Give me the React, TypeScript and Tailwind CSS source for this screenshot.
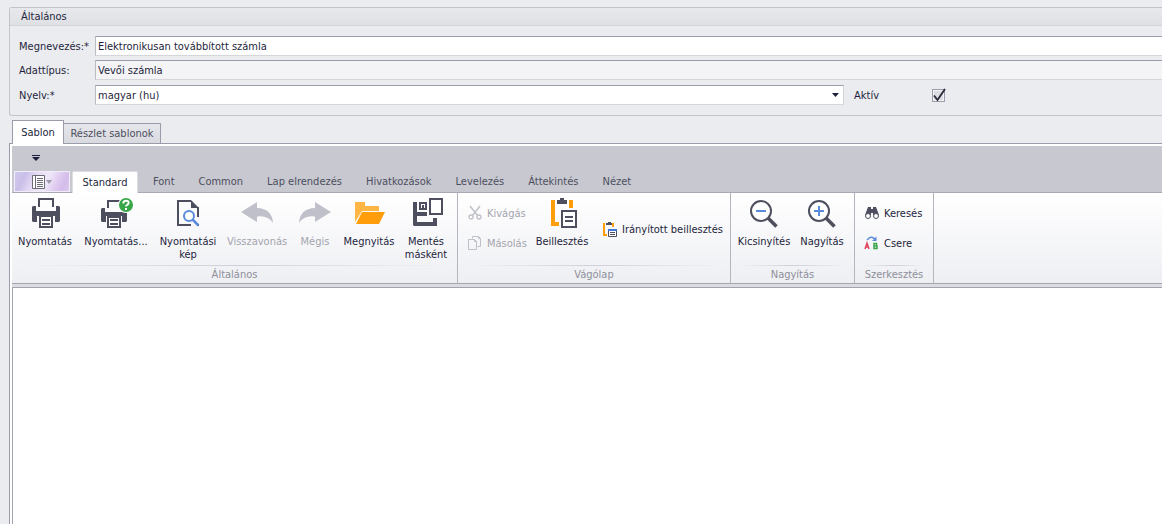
import React from "react";

const RIBBON_TABS = ["Standard", "Font", "Common", "Lap elrendezés", "Hivatkozások", "Levelezés", "Áttekintés", "Nézet"];

function BigIcon({ children }: { children: React.ReactNode }) {
  return (
    <svg width="32" height="32" viewBox="0 0 32 32" className="shrink-0 overflow-visible" aria-hidden="true">
      {children}
    </svg>
  );
}

function SmallIcon({ children }: { children: React.ReactNode }) {
  return (
    <svg width="16" height="16" viewBox="0 0 16 16" className="shrink-0" aria-hidden="true">
      {children}
    </svg>
  );
}

const PrintIcon = () => (
  <BigIcon>
    <path d="M10 10V2h14v8" fill="none" stroke="#4d4f5e" strokeWidth="2" />
    <path d="M4 9h3v5h20V9h3l1 1v14l-1 1h-4v-6H8v6H4l-1-1V10z" fill="#4d4f5e" />
    <path d="M11 19h12v11H11z" fill="#fff" stroke="#4d4f5e" strokeWidth="2" />
    <path d="M13 22h8v2h-8zM13 26h8v2h-8z" fill="#4d4f5e" />
  </BigIcon>
);

const PrintHelpIcon = () => (
  <BigIcon>
    <path d="M8 11V4h13v7" fill="none" stroke="#4d4f5e" strokeWidth="2" />
    <path d="M2 11h3v4h19v-3h3v12l-1 1h-4v-6H6v6H2l-1-1V12z" fill="#4d4f5e" />
    <path d="M8 20h12v10H8z" fill="#fff" stroke="#4d4f5e" strokeWidth="2" />
    <path d="M10 22h8v2h-8zM10 26h8v2h-8z" fill="#4d4f5e" />
    <circle cx="26" cy="8" r="8" fill="#fff" />
    <circle cx="26" cy="8" r="7" fill="#39a749" />
    <path d="M23.400 6.600V5.800q.3-2 2.600-2 2.700 0 2.700 2 0 1-1.200 1.800Q26 8.400 26 9.600" fill="none" stroke="#fff" strokeWidth="1.900" />
    <path d="M25 11h2v2h-2z" fill="#fff" />
  </BigIcon>
);

const PreviewIcon = () => (
  <BigIcon>
    <path d="M19 4H6v24h13M26 10v10" fill="none" stroke="#4d4f5e" strokeWidth="2" />
    <path d="M19 3l8 8h-8zM25 26v3h2v-1z" fill="#4d4f5e" />
    <circle cx="17" cy="19" r="5" fill="#fff" stroke="#5a8bdb" strokeWidth="2" />
    <path d="M20.500 22.500l6 6" stroke="#5a8bdb" strokeWidth="2.500" />
  </BigIcon>
);

const UndoIcon = () => (
  <BigIcon>
    <path d="M0 15L16 5v6q15 .5 16 15-5-8-16-6.500V25z" fill="#bfc0c9" />
  </BigIcon>
);

const RedoIcon = () => (
  <BigIcon>
    <path d="M32 15L16 5v6Q1 11.500 0 26q5-8 16-6.500V25z" fill="#bfc0c9" />
  </BigIcon>
);

const OpenIcon = () => (
  <BigIcon>
    <path d="M2 25V5h10v4h14v5H9z" fill="#ffb645" />
    <path d="M9 15h23l-6 12H3z" fill="#ff9d0a" />
  </BigIcon>
);

const SaveAsIcon = () => (
  <BigIcon>
    <path d="M3 5h4v10h10v4H7v6h16v-4h4v8H4l-1-1z" fill="#4d4f5e" />
    <path d="M10 6h6v6h-6z" fill="none" stroke="#4d4f5e" strokeWidth="2" />
    <path d="M12 8h2v3h-2z" fill="#4d4f5e" />
    <path d="M20 2h12v15H20z" fill="#fff" stroke="#4d4f5e" strokeWidth="2" />
  </BigIcon>
);

const PasteIcon = () => (
  <BigIcon>
    <path d="M5 3h4v22h4v4H5zM23 3h4v8h-4z" fill="#ff9d0a" />
    <path d="M11 3h3V1h4v2h3v4H11z" fill="#4d4f5e" />
    <path d="M16 14h14v16H16z" fill="#fff" stroke="#4d4f5e" strokeWidth="2" />
    <path d="M19 19h8v2h-8zM19 23h8v2h-8z" fill="#4d4f5e" />
  </BigIcon>
);

function ZoomIcon({ plus }: { plus?: boolean }) {
  return (
    <BigIcon>
      <circle cx="13" cy="14" r="10" fill="#fff" stroke="#4d4f5e" strokeWidth="2" />
      <path d="M20 21l8.500 8.500" stroke="#4d4f5e" strokeWidth="3.500" />
      <path d={plus ? "M8 14h10M13 9v10" : "M8 14h10"} stroke="#5a8bdb" strokeWidth="2" />
    </BigIcon>
  );
}

const CutIcon = () => (
  <SmallIcon>
    <path d="M3 1l8 10M13 1L5 11" fill="none" stroke="#bfc0c9" strokeWidth="1.500" />
    <circle cx="4" cy="12" r="2" fill="none" stroke="#bfc0c9" strokeWidth="1.300" />
    <circle cx="12" cy="12" r="2" fill="none" stroke="#bfc0c9" strokeWidth="1.300" />
  </SmallIcon>
);

const CopyIcon = () => (
  <SmallIcon>
    <path d="M5.500 3.500v-2h6l2 2v8h-3M11.500 1.500v2h2M1.500 4.500h6l2 2v8h-8zM7.500 4.500v2h2" fill="none" stroke="#bfc0c9" />
  </SmallIcon>
);

const PasteSpecialIcon = () => (
  <SmallIcon>
    <path d="M1 2h2v11h2v2H1zM10 2h2v4h-2z" fill="#ff9d0a" />
    <path d="M4 2h2V1h3v1h1v2H4z" fill="#4d4f5e" />
    <path d="M6.500 8.500h8v7h-8z" fill="#fff" stroke="#4d4f5e" />
    <path d="M6 8h9v2H6z" fill="#3f7ad6" />
    <path d="M8 11.500h5M8 13.500h5" stroke="#4d4f5e" />
  </SmallIcon>
);

const FindIcon = () => (
  <SmallIcon>
    <path d="M4 2h3v2h2V2h3l3 8H9V8H7v2H1z" fill="#4d4f5e" />
    <circle cx="4" cy="11" r="2.500" fill="#fff" stroke="#4d4f5e" />
    <circle cx="12" cy="11" r="2.500" fill="#fff" stroke="#4d4f5e" />
  </SmallIcon>
);

const ReplaceIcon = () => (
  <SmallIcon>
    <path d="M3 5q4-5 8-1" fill="none" stroke="#5a8bdb" strokeWidth="1.500" />
    <path d="M12.500 1.500V6H8z" fill="#5a8bdb" />
    <path d="M1 14L3 8l2 6M2 12h3" fill="none" stroke="#e2445c" strokeWidth="1.500" />
    <path d="M10 8.500h2.500v2.500H10zM10 11h3v2.500h-3z" fill="none" stroke="#39a749" strokeWidth="1.500" />
  </SmallIcon>
);

interface ButtonProps {
  icon: React.ReactNode;
  label: string;
  width?: string;
  disabled?: boolean;
}

function LargeButton({ icon, label, width, disabled }: ButtonProps) {
  return (
    <button
      type="button"
      disabled={disabled}
      className={`flex flex-col items-center gap-1.5 pt-1 leading-[13px] text-[#1e1f3c] disabled:text-[#a3a4ad] ${width}`}
    >
      {icon}
      <span className="whitespace-pre text-center">{label}</span>
    </button>
  );
}

function SmallButton({ icon, label, disabled }: ButtonProps) {
  return (
    <button
      type="button"
      disabled={disabled}
      className="flex items-center gap-1 whitespace-nowrap text-[#1e1f3c] disabled:text-[#a3a4ad]"
    >
      {icon}
      {label}
    </button>
  );
}

function RibbonGroup({ title, className, children }: { title: string; className: string; children: React.ReactNode }) {
  return (
    <section className="flex shrink-0 flex-col border-r border-[#b4b5be]">
      <div className={`flex h-[72px] ${className}`}>{children}</div>
      <div className="mx-2 h-px bg-linear-to-r from-transparent via-[#cfd0d7] to-transparent" />
      <h2 className="flex h-[17px] items-center justify-center text-[#8d8f9a]">{title}</h2>
    </section>
  );
}

const fieldClass = "h-5 min-w-0 flex-1 border border-[#d5d6dc] border-t-[#9a9cab] border-l-[#b9bac4] pl-0.5 outline-none";

export default function App() {
  return (
    <div className="flex min-h-screen flex-col overflow-hidden bg-[#ebecef] pl-[9px] pt-[7px] font-['DejaVu_Sans_Condensed','Liberation_Sans',sans-serif] text-[11px] leading-[13px] text-[#1e1f3c]">
      <fieldset className="min-w-0 rounded-l-[3px] border border-r-0 border-[#c3c4cb]">
        <div className="flex h-[18px] items-center border-b border-[#d3d4d9] bg-linear-to-b from-[#e8e9ec] to-[#dfe0e4] pl-[11px]">
          Általános
        </div>
        <div className="flex flex-col pb-2.5 pl-[9px] pt-2.5">
          <div className="mb-1 flex items-center">
            <label htmlFor="name" className="w-[76px] whitespace-nowrap">Megnevezés:*</label>
            <input id="name" className={`${fieldClass} border-r-0 bg-white`} defaultValue="Elektronikusan továbbított számla" />
          </div>
          <div className="mb-[5px] flex items-center">
            <label htmlFor="type" className="w-[76px]">Adattípus:</label>
            <input id="type" readOnly className={`${fieldClass} border-r-0 bg-[#f4f4f6]`} defaultValue="Vevői számla" />
          </div>
          <div className="flex items-center">
            <label htmlFor="lang" className="w-[76px]">Nyelv:*</label>
            <div className="relative flex min-w-0 flex-1">
              <select id="lang" className={`${fieldClass} appearance-none bg-white`}>
                <option>magyar (hu)</option>
              </select>
              <svg width="7" height="4" viewBox="0 0 7 4" className="pointer-events-none absolute right-[5px] top-2">
                <path d="M0 0h7L3.500 4z" fill="#1e1f3c" />
              </svg>
            </div>
            <div className="flex w-[318px] items-center pl-2.5">
              <label htmlFor="active" className="w-[78px]">Aktív</label>
              <span className="relative flex">
                <input id="active" type="checkbox" defaultChecked className="peer size-[13px] appearance-none border border-[#9a9cab] bg-[#dcdde3] shadow-[inset_0_0_0_1px_#f4f4f6]" />
                <svg width="14" height="14" viewBox="0 0 14 14" className="pointer-events-none absolute bottom-0 left-0 hidden peer-checked:block">
                  <path d="M2 7.500l3.500 4.500L13 1" fill="none" stroke="#2b2c3c" strokeWidth="1.900" />
                </svg>
              </span>
            </div>
          </div>
        </div>
      </fieldset>

      <div className="mt-1 flex items-end pl-[3px]" role="tablist">
        <button type="button" role="tab" aria-selected="true" className="relative z-10 -mb-px h-6 w-[52px] border border-b-0 border-[#9a9cab] bg-white">
          Sablon
        </button>
        <button type="button" role="tab" aria-selected="false" className="h-5 w-[97px] whitespace-nowrap border border-b-0 border-l-0 border-[#9a9cab] bg-linear-to-b from-[#e6e7eb] to-[#d9dae0] text-[#4d4f5e]">
          Részlet sablonok
        </button>
      </div>

      <main className="flex flex-1 flex-col border-l border-t border-[#9a9cab] bg-white pl-0.5 pt-0.5">
        <div className="flex h-[25px] items-center bg-[#c8c8d0] pl-5">
          <button type="button" aria-label="Gyorselérési eszköztár" className="pb-0.5">
            <svg width="8" height="6" viewBox="0 0 8 6" className="block">
              <path d="M0 0h8v1H0zM0 2h8L4 6z" fill="#1e1f3c" />
            </svg>
          </button>
        </div>
        <div className="flex h-[22px] items-stretch border-b border-[#a9a9b6] bg-[#c8c8d0] pl-0.5">
          <button
            type="button"
            aria-label="Fájl"
            className="mr-0.5 flex w-14 items-center justify-center gap-px border border-[#f1edf8] bg-[linear-gradient(115deg,#d3caef,#c9bfe8_18%,#e6dbf4_36%,#efe7f9_58%,#dfcaf0_75%,#d3bde9_88%,#dccbf0)]"
          >
            <svg width="13" height="14" viewBox="0 0 13 14">
              <path d="M.5.5h12v13H.5z" fill="#fff" stroke="#6b6c74" />
              <path d="M3.500 0v14M5 3.500h6M5 5.500h6M5 7.500h6M5 9.500h6M5 11.500h6" stroke="#6b6c74" />
            </svg>
            <svg width="6" height="4" viewBox="0 0 6 4">
              <path d="M0 0h6L3 4z" fill="#9a9aa5" />
            </svg>
          </button>
          {RIBBON_TABS.map((tab, i) => (
            <button
              key={tab}
              type="button"
              className={`whitespace-nowrap ${
                i === 0 ? "relative z-10 -mb-px mr-[3px] w-[66px] rounded-t-[2px] border border-b-0 border-[#dcdce2] bg-white pb-px" : "px-3 text-[#4d4f5e]"
              }`}
            >
              {tab}
            </button>
          ))}
        </div>

        <div className="flex border-b border-[#a3a4ad] bg-linear-to-b from-white to-[#eeeff3]">
          <RibbonGroup title="Általános" className="pr-[5px]">
            <LargeButton icon={<PrintIcon />} label="Nyomtatás" width="w-[66px]" />
            <LargeButton icon={<PrintHelpIcon />} label="Nyomtatás..." width="w-[76px]" />
            <LargeButton icon={<PreviewIcon />} label={"Nyomtatási\nkép"} width="w-[68px]" />
            <LargeButton icon={<UndoIcon />} label="Visszavonás" width="w-[70px]" disabled />
            <LargeButton icon={<RedoIcon />} label="Mégis" width="w-[46px]" disabled />
            <LargeButton icon={<OpenIcon />} label="Megnyitás" width="w-[62px]" />
            <LargeButton icon={<SaveAsIcon />} label={"Mentés\nmásként"} width="w-[52px]" />
          </RibbonGroup>
          <RibbonGroup title="Vágólap" className="pl-[9px] pr-2.5">
            <div className="flex w-[65px] flex-col items-start gap-3.5 pt-3">
              <SmallButton icon={<CutIcon />} label="Kivágás" disabled />
              <SmallButton icon={<CopyIcon />} label="Másolás" disabled />
            </div>
            <LargeButton icon={<PasteIcon />} label="Beillesztés" width="w-[60px]" />
            <div className="flex w-[128px] items-center pl-2.5">
              <SmallButton icon={<PasteSpecialIcon />} label="Irányított beillesztés" />
            </div>
          </RibbonGroup>
          <RibbonGroup title="Nagyítás" className="pl-0.5 pr-[5px]">
            <LargeButton icon={<ZoomIcon />} label="Kicsinyítés" width="w-[62px]" />
            <LargeButton icon={<ZoomIcon plus />} label="Nagyítás" width="w-[54px]" />
          </RibbonGroup>
          <RibbonGroup title="Szerkesztés" className="w-[78px] pl-[9px]">
            <div className="flex flex-col items-start gap-3.5 pt-3">
              <SmallButton icon={<FindIcon />} label="Keresés" />
              <SmallButton icon={<ReplaceIcon />} label="Csere" />
            </div>
          </RibbonGroup>
        </div>
        <div className="h-[3px] bg-[#dcdde2]" />
        <textarea aria-label="Sablon szövege" className="block w-full flex-1 resize-none border-l border-t border-[#a3a4ad] bg-white outline-none" />
      </main>
    </div>
  );
}
